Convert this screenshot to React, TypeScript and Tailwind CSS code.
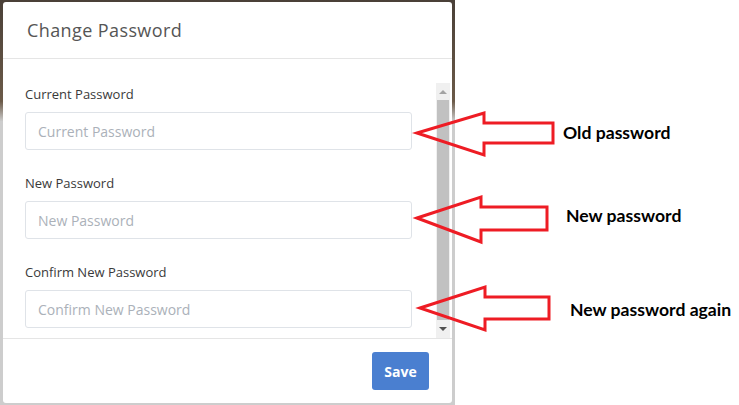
const fields = [
    { label: 'Current Password', placeholder: 'Current Password' },
    { label: 'New Password', placeholder: 'New Password' },
    { label: 'Confirm New Password', placeholder: 'Confirm New Password' },
]

const notes = [
    { text: 'Old password', top: 'top-[121px]', left: 'left-[563px]' },
    { text: 'New password', top: 'top-[204px]', left: 'left-[566px]' },
    { text: 'New password again', top: 'top-[298px]', left: 'left-[570px]' },
]

const Scrollbar = () => {
    return (
        <div className="mt-[24px] mr-[2px] flex w-[14px] flex-col bg-[#f0f0f0]">
            <div className="flex h-[17px] items-center justify-center">
                <div className="h-0 w-0 border-x-[4px] border-b-[4px] border-x-transparent border-b-[#a3a3a3]" />
            </div>
            <div className="mx-[1px] h-[220px] bg-[#c1c1c1]" />
            <div className="flex flex-1 items-center justify-center">
                <div className="h-0 w-0 border-x-[4px] border-t-[4px] border-x-transparent border-t-[#505050]" />
            </div>
        </div>
    )
}

const Modal = () => {
    return (
        <div className="flex h-[401px] w-[449px] flex-col rounded-[3px] bg-white font-['Open_Sans',sans-serif]">
            <div className="flex h-[57px] items-center border-b border-[#e5e5e5] px-[24px] text-[18px] tracking-[0.4px] text-[#555]">
                Change Password
            </div>
            <div className="flex h-[279px]">
                <div className="flex-1 pt-[26px] pl-[22px]">
                    {fields.map((f) => (
                        <div key={f.label} className="mb-[24px] flex flex-col">
                            <label className="mb-[9px] text-[13px] leading-[18px] font-medium text-[#3a3a3a]">{f.label}</label>
                            <input
                                type="password"
                                placeholder={f.placeholder}
                                className="h-[38px] w-[387px] rounded-[3px] border border-[#dfe3e8] px-[12px] text-[14px] outline-none placeholder:text-[#abb1b9]"
                            />
                        </div>
                    ))}
                </div>
                <Scrollbar />
            </div>
            <div className="flex flex-1 items-center justify-end border-t border-[#e5e5e5] pr-[23px]">
                <button className="h-[38px] w-[57px] rounded-[3px] bg-[#4a7fd0] text-[14px] font-bold text-white">Save</button>
            </div>
        </div>
    )
}

const App = () => {
    return (
        <div className="relative flex h-[405px] w-[739px] overflow-hidden bg-white">
            <div className="h-full w-[455px] bg-[linear-gradient(to_bottom,#4a4038_0%,#6b5a48_25%,#cdcdcd_30%,#cdcdcd_100%)] pt-[2px] pl-[3px]">
                <Modal />
            </div>

            <svg className="pointer-events-none absolute top-0 left-0" width="739" height="405">
                <g fill="none" stroke="#ee1c24" strokeWidth="3" strokeLinejoin="miter">
                    <polygon points="417,133 484,113 484,123 553,123 553,143 484,143 484,155" />
                    <polygon points="417,218 481,197 481,207 547,207 547,230 481,230 481,242" />
                    <polygon points="420,308 485,287 485,297 549,297 549,319 485,319 485,330" />
                </g>
            </svg>

            {notes.map((n) => (
                <div
                    key={n.text}
                    className={`absolute ${n.top} ${n.left} font-['Lato',sans-serif] text-[17.6px] leading-[24px] font-bold text-black`}
                >
                    {n.text}
                </div>
            ))}
        </div>
    )
}

export default App
